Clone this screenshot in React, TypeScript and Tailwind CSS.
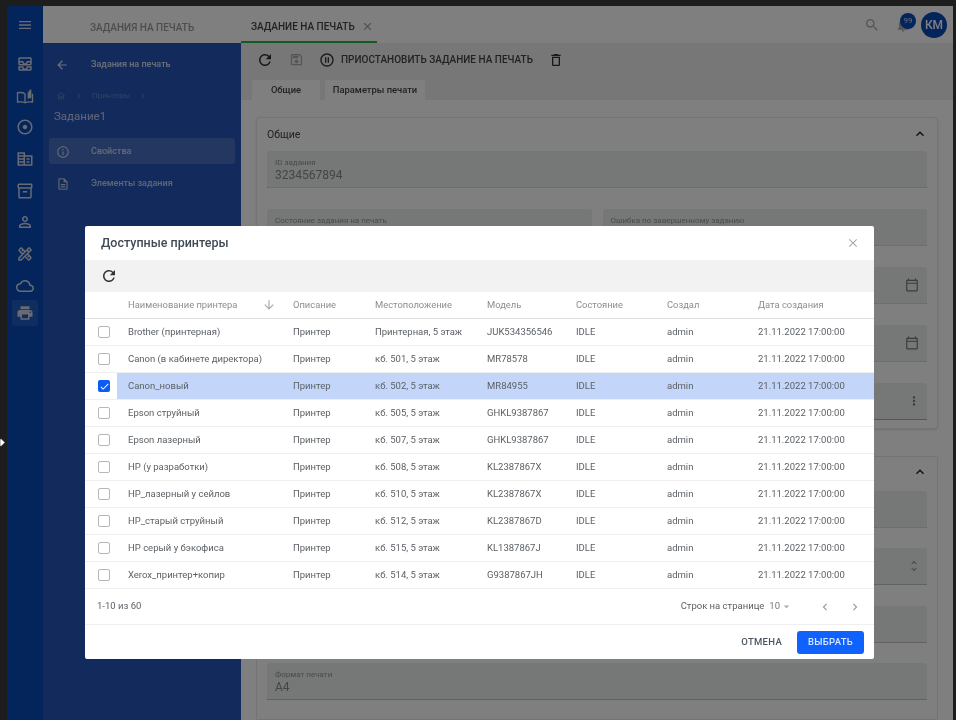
import {
  MdMenu, MdOutlineAllInbox, MdOutlineAdjust, MdOutlineCorporateFare, MdOutlineInventory2,
  MdOutlinePermIdentity, MdOutlineDesignServices, MdOutlineCloud, MdPrint, MdRefresh, MdOutlineSave,
  MdOutlinePauseCircle, MdOutlineDelete, MdSearch, MdNotifications, MdClose, MdOutlineCalendarToday, MdMoreVert,
  MdUnfoldMore, MdExpandLess, MdArrowBack, MdArrowDownward, MdInfoOutline, MdOutlineDescription, MdOutlineHome,
  MdChevronRight, MdChevronLeft, MdArrowDropDown, MdCheck,
} from "react-icons/md";

const printers = [
  { name: "Brother (принтерная)", place: "Принтерная, 5 этаж", model: "JUK534356546" },
  { name: "Canon (в кабинете директора)", place: "кб. 501, 5 этаж", model: "MR78578" },
  { name: "Canon_новый", place: "кб. 502, 5 этаж", model: "MR84955", selected: true },
  { name: "Epson струйный", place: "кб. 505, 5 этаж", model: "GHKL9387867" },
  { name: "Epson лазерный", place: "кб. 507, 5 этаж", model: "GHKL9387867" },
  { name: "HP (у разработки)", place: "кб. 508, 5 этаж", model: "KL2387867X" },
  { name: "HP_лазерный у сейлов", place: "кб. 510, 5 этаж", model: "KL2387867X" },
  { name: "HP_старый струйный", place: "кб. 512, 5 этаж", model: "KL2387867D" },
  { name: "HP серый у бэкофиса", place: "кб. 515, 5 этаж", model: "KL1387867J" },
  { name: "Xerox_принтер+копир", place: "кб. 514, 5 этаж", model: "G9387867JH" },
];

// open book with a pencil, not in the icon set
const BookPencil = ({ className }: { className?: string }) => (
  <svg className={className} viewBox="0 0 24 24" fill="none" stroke="currentColor" strokeWidth="1.8">
    <path d="M12 9 C10 7.5 6 7 2 7.5 V20 C6 19.5 10 20 12 21 C14 20 18 19.5 22 20 V9" />
    <path d="M12 9 V21" />
    <path d="M15.5 15.5 V8 L19 3 L20.5 4 V14.5 Z" fill="currentColor" stroke="none" />
  </svg>
);

const railIcons = [
  MdOutlineAllInbox, BookPencil, MdOutlineAdjust, MdOutlineCorporateFare,
  MdOutlineInventory2, MdOutlinePermIdentity, MdOutlineDesignServices, MdOutlineCloud,
];

const columns = "grid grid-cols-[32px_176px_82px_112px_89px_91px_91px_1fr] items-center";

const Field = ({ label, value, className = "", children }: { label?: string; value?: string; className?: string; children?: React.ReactNode }) => (
  <div className={`h-[37px] bg-[#eceeee] border-b rounded-t-[3px] px-2 flex items-center justify-between ${className}`}>
    <div className="flex flex-col self-start pt-[7px]">
      {label && <span className="text-[8px] leading-[10px] text-[#949494]">{label}</span>}
      {value && <span className="text-[12px] leading-[15px] text-[#888]">{value}</span>}
    </div>
    {children}
  </div>
);

const App = () => {
  return (
    <div className="relative w-[956px] h-[720px] overflow-hidden bg-[#1d1d1d] pt-[6px] pl-[7px] pr-[3px] blur-[0.5px] font-['Roboto',sans-serif]">
      <div className="relative h-[714px] flex bg-white overflow-hidden">
        {/* Rail */}
        <div className="w-[36px] shrink-0 bg-[#0848b8] flex flex-col items-center text-[#d0d6e6]">
          <div className="h-[37px] flex items-center justify-center">
            <MdMenu className="w-[16px] h-[16px]" />
          </div>
          <div className="flex flex-col items-center gap-[13.7px] pt-[12px]">
            {railIcons.map((Icon, i) => (
              <Icon key={i} className="w-[18px] h-[18px]" />
            ))}
          </div>
          <div className="mt-[5px] w-[26px] h-[26px] rounded-[3px] bg-white/10 flex items-center justify-center">
            <MdPrint className="w-[18px] h-[18px]" />
          </div>
        </div>

        <div className="flex-1 flex flex-col min-w-0">
          {/* Top bar */}
          <div className="h-[37px] shrink-0 bg-white flex items-center">
            <div className="w-[198px] pl-[47px] pt-[6px] whitespace-nowrap text-[10px] font-medium text-[#9a9a9a]">ЗАДАНИЯ НА ПЕЧАТЬ</div>
            <div className="h-full w-[136px] pl-[10px] pt-[6px] flex items-center gap-[6px] whitespace-nowrap text-[10px] font-medium text-[#444] border-b-2 border-[#2cb341]">
              ЗАДАНИЕ НА ПЕЧАТЬ
              <MdClose className="w-[13px] h-[13px] text-[#999]" />
            </div>
            <div className="flex-1" />
            <MdSearch className="w-[16px] h-[16px] text-[#aaa] mr-[15px]" />
            <div className="relative mr-[10px]">
              <MdNotifications className="w-[16px] h-[16px] text-[#aaa]" />
              <span className="absolute -top-[4px] left-[5px] w-[16px] h-[16px] rounded-full bg-[#0848b8] text-white/80 text-[8px] flex items-center justify-center">99</span>
            </div>
            <div className="w-[26px] h-[26px] rounded-full bg-[#0848b8] text-white text-[12px] font-medium flex items-center justify-center mr-[6px]">КМ</div>
          </div>

          <div className="flex-1 flex min-h-0">
            {/* Side panel */}
            <div className="w-[198px] shrink-0 bg-[#2755b8] text-white">
              <div className="h-[42px] pt-[1px] pl-[12px] flex items-center gap-[22px] text-[9px] font-medium text-white/80">
                <MdArrowBack className="w-[14px] h-[14px]" />
                Задания на печать
              </div>
              <div className="h-[12px] mt-[5px] pl-[13px] flex items-center gap-[8px] text-[8px] text-white/25">
                <MdOutlineHome className="w-[10px] h-[10px]" />
                <MdChevronRight className="w-[10px] h-[10px]" />
                <span>Принтеры</span>
                <MdChevronRight className="w-[10px] h-[10px]" />
              </div>
              <div className="mt-[7px] pl-[11px] text-[11.5px] leading-[15px] text-white/70">Задание1</div>
              <div className="mt-[14px] mx-[6px] h-[26px] pt-[1px] rounded-[3px] bg-white/15 flex items-center pl-[7px] gap-[21px] text-[9px] font-medium text-white/70">
                <MdInfoOutline className="w-[14px] h-[14px]" />
                Свойства
              </div>
              <div className="mt-[6px] mx-[6px] h-[26px] pt-[1px] flex items-center pl-[7px] gap-[21px] text-[9px] font-medium text-white/70">
                <MdOutlineDescription className="w-[14px] h-[14px]" />
                Элементы задания
              </div>
            </div>

            {/* Main */}
            <div className="flex-1 min-w-0 flex flex-col">
              <div className="h-[57px] shrink-0 bg-[#efefef] flex flex-col">
                <div className="h-[37px] pb-[4px] flex items-center pl-[15px] text-[#333]">
                  <MdRefresh className="w-[18px] h-[18px]" />
                  <MdOutlineSave className="w-[15px] h-[15px] ml-[15px] text-[#aaa]" />
                  <MdOutlinePauseCircle className="w-[16px] h-[16px] ml-[15px]" />
                  <span className="ml-[6px] whitespace-nowrap text-[10px] font-medium text-[#444]">ПРИОСТАНОВИТЬ ЗАДАНИЕ НА ПЕЧАТЬ</span>
                  <MdOutlineDelete className="w-[16px] h-[16px] ml-[15px]" />
                </div>
                <div className="flex-1 flex pl-[11px] gap-[5px] text-[9.4px] font-medium text-[#444]">
                  <div className="w-[68px] pt-[1px] bg-white rounded-t-[3px] flex items-center justify-center">Общие</div>
                  <div className="w-[100px] pt-[1px] bg-white rounded-t-[3px] flex items-center justify-center">Параметры печати</div>
                </div>
              </div>
              <div className="flex-1 bg-white pt-[17px] pl-[15px] pr-[15px] flex flex-col gap-[27px]">
                <div className="border border-[#e8e8e8] shadow-sm rounded-[3px] px-[10px] pb-[8px]">
                  <div className="h-[33px] flex items-center justify-between text-[10.5px] text-[#444]">
                    Общие
                    <MdExpandLess className="w-[16px] h-[16px] text-[#222] -mr-[1px] -mt-[2px]" />
                  </div>
                  <div className="flex flex-col gap-[21px]">
                    <Field label="ID задания" value="3234567894" className="border-dotted border-[#c8c8c8]" />
                    <div className="grid grid-cols-2 gap-[11px]">
                      <Field label="Состояние задания на печать" className="border-dotted border-[#c8c8c8]" />
                      <Field label="Ошибка по завершенному заданию" className="border-dotted border-[#c8c8c8]" />
                    </div>
                    <Field className="border-dotted border-[#c8c8c8]"><MdOutlineCalendarToday className="w-[14px] h-[14px] text-[#777]" /></Field>
                    <Field className="border-dotted border-[#c8c8c8]"><MdOutlineCalendarToday className="w-[14px] h-[14px] text-[#777]" /></Field>
                    <Field className="border-[#aaa]"><MdMoreVert className="w-[14px] h-[14px] text-[#777] -mr-[2px]" /></Field>
                  </div>
                </div>
                <div className="flex-1 border border-[#e8e8e8] rounded-t-[3px] px-[10px]">
                  <div className="h-[34px] flex items-center justify-end">
                    <MdExpandLess className="w-[16px] h-[16px] text-[#222] -mr-[1px] -mt-[4px]" />
                  </div>
                  <div className="flex flex-col gap-[20.4px]">
                    <Field className="border-dotted border-[#c8c8c8]" />
                    <Field className="border-[#c4c4c4]"><MdUnfoldMore className="w-[14px] h-[14px] text-[#999] -mr-[2px]" /></Field>
                    <Field className="border-[#c4c4c4]" />
                    <Field label="Формат печати" value="A4" className="border-[#c4c4c4]" />
                  </div>
                </div>
              </div>
            </div>
          </div>
        </div>

        {/* Scrim */}
        <div className="absolute inset-0 bg-[#00000080]" />
      </div>

      {/* Dialog */}
      <div className="absolute left-[85px] top-[226px] w-[789px] h-[433px] bg-white rounded-[2px] flex flex-col text-[#555]">
        <div className="h-[34px] shrink-0 flex items-center justify-between pl-[16px] pr-[14px]">
          <span className="text-[12.5px] font-medium text-[#3f4a54]">Доступные принтеры</span>
          <MdClose className="w-[14px] h-[14px] text-[#aaa]" />
        </div>
        <div className="h-[32px] shrink-0 bg-[#f2f2f2] flex items-center pl-[15px] text-[#333]">
          <MdRefresh className="w-[18px] h-[18px]" />
        </div>
        <div className={`${columns} h-[27px] pt-[1px] shrink-0 border-b border-[#dedede] text-[9.4px] text-[#8a8f94]`}>
          <span />
          <div className="pl-[11px] pr-[17px] flex items-center justify-between whitespace-nowrap">
            Наименование принтера
            <MdArrowDownward className="w-[14px] h-[14px] text-[#aaa]" />
          </div>
          <span>Описание</span>
          <span>Местоположение</span>
          <span>Модель</span>
          <span>Состояние</span>
          <span>Создал</span>
          <span>Дата создания</span>
        </div>
        {printers.map((p) => (
          <div key={p.name} className={`${columns} h-[27px] shrink-0 border-b border-[#efefef] text-[9.5px] text-[#5c6166]`}>
            <div className="h-full flex items-center pl-[13px] bg-white">
              {p.selected ? (
                <span className="w-[12px] h-[12px] rounded-[2px] bg-[#0c5cf0] flex items-center justify-center">
                  <MdCheck className="w-[11px] h-[11px] text-white" />
                </span>
              ) : (
                <span className="w-[12px] h-[12px] rounded-[2px] border border-[#b5b8bb] bg-white" />
              )}
            </div>
            {[
              <span className="pl-[11px]">{p.name}</span>,
              "Принтер",
              p.place,
              p.model,
              "IDLE",
              "admin",
              "21.11.2022 17:00:00",
            ].map((cell, i) => (
              <div key={i} className={`h-full pt-[1px] flex items-center whitespace-nowrap ${p.selected ? "bg-[#c3d6fa]" : ""}`}>{cell}</div>
            ))}
          </div>
        ))}
        <div className="h-[36px] shrink-0 flex items-center justify-between border-b border-[#efefef] pl-[12px] pr-[12px] text-[9.5px] text-[#5c6166]">
          <span>1-10 из 60</span>
          <div className="flex items-center">
            <span>Строк на странице</span>
            <span className="ml-[5px] text-[#777]">10</span>
            <MdArrowDropDown className="w-[13px] h-[13px] text-[#aaa]" />
            <MdChevronLeft className="w-[14px] h-[14px] ml-[25px] text-[#999]" />
            <MdChevronRight className="w-[14px] h-[14px] ml-[16px] text-[#999]" />
          </div>
        </div>
        <div className="flex-1 flex items-center justify-end pr-[10px]">
          <span className="text-[9.5px] font-medium tracking-[0.3px] text-[#4a5560] mr-[15px]">ОТМЕНА</span>
          <div className="w-[67px] h-[23px] rounded-[3px] bg-[#0f62fe] text-[#dbe6ff] text-[9.5px] font-medium tracking-[0.3px] flex items-center justify-center">ВЫБРАТЬ</div>
        </div>
      </div>

      {/* Cursor */}
      <svg className="absolute left-0 top-[438px]" width="6" height="9" viewBox="0 0 6 9">
        <path d="M1 0.5 L5 4.5 L1 8.5 L0 7.5 L0 1.5 Z" fill="#fff" stroke="#000" strokeWidth="0.5" />
      </svg>
    </div>
  );
};

export default App;
